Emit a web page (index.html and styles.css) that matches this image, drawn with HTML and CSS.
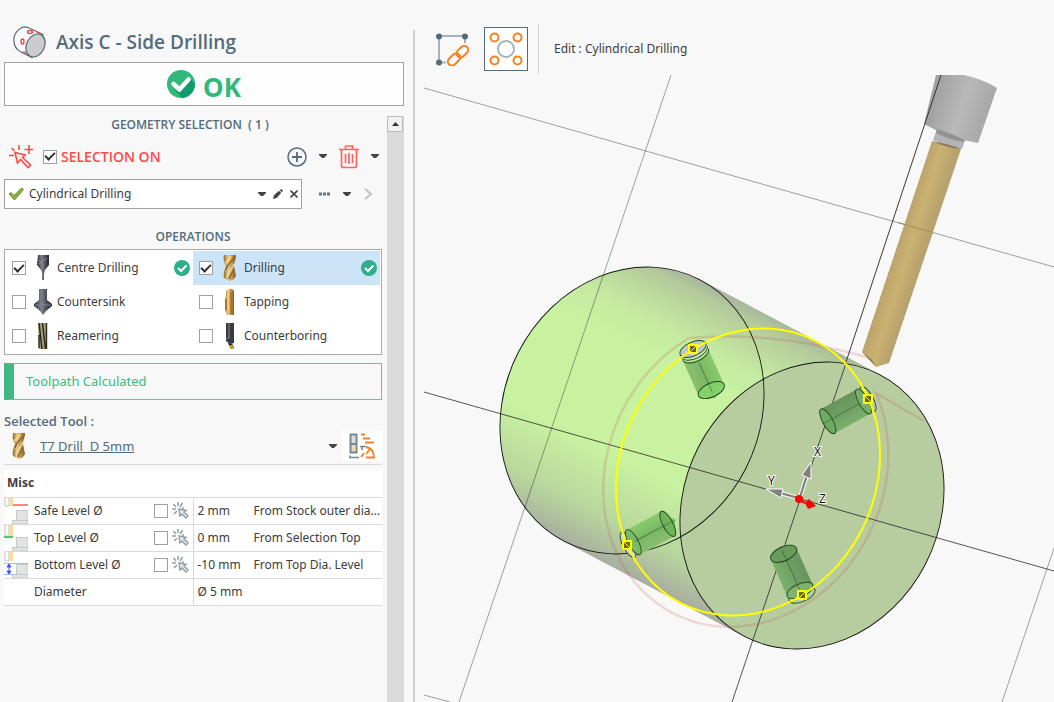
FILE: index.html
```html
<!DOCTYPE html>
<html lang="en">
<head>
<meta charset="utf-8">
<title>Axis C - Side Drilling</title>
<link rel="stylesheet" href="styles.css">
</head>
<body>
<svg class="defs" width="0" height="0" aria-hidden="true">
  <defs>
    <linearGradient id="gold" x1="0" x2="1"><stop offset="0" stop-color="#8a652c"/><stop offset=".35" stop-color="#eccd85"/><stop offset=".65" stop-color="#c79a4b"/><stop offset="1" stop-color="#7a5626"/></linearGradient>
    <linearGradient id="steel" x1="0" x2="1"><stop offset="0" stop-color="#2c2e36"/><stop offset=".4" stop-color="#7d818c"/><stop offset=".7" stop-color="#4a4d57"/><stop offset="1" stop-color="#25262c"/></linearGradient>
    <symbol id="caret" viewBox="0 0 8 5"><path d="M0 0h8v1L5 4H3L0 1z" fill="#444"/></symbol>
    <symbol id="done" viewBox="0 0 16 16"><circle cx="8" cy="8" r="8" fill="#2fae8e"/><path d="M4 8l3 3 5.500-5.500" fill="none" stroke="#fff" stroke-width="2"/></symbol>
    <symbol id="drill" viewBox="0 0 16 26"><path d="M2 0h12c0 3-1 6-2 9 0 4 1 6 2 12l-2 3-4 2-6-3c-1-5 1-9 2-12C2 8 1 4 2 0z" fill="url(#gold)"/><path d="M13 1C11 7 5 8 4 15M12 14c-1 4-4 6-5 10" stroke="#8a6833" stroke-width="1.500" fill="none"/><path d="M9 1c-1 4-4 5-6 7M12 9c-2 5-6 8-7 13" stroke="#f3d797" stroke-width="1.500" fill="none"/></symbol>
    <symbol id="pick" viewBox="0 0 17 17"><g fill="none" stroke="#8fa0a8" stroke-width="1.500"><path d="M6 0v4M1.500 2l2.500 3M0 7h4M2 12l3-3M10.500 1L8 5M12 6h-2"/><path d="M7 7l1 7 2-2 4 4 2-2-4-4 2-1.500z" fill="#e9eef0"/></g></symbol>
    <symbol id="block" viewBox="0 0 24 26"><path d="M12.500 12.500H24v10H12.500zM8.500 22.500H24V26H8.500z" fill="#e3e3e3" stroke="#c3c8cb"/></symbol>
  </defs>
</svg>
<div class="app">
  <section class="panel">
    <header class="title">
      <svg width="34" height="34" viewBox="0 0 34 34"><path d="M15 2.500C8 0 0 8 1 16c0 6 3 9 7 11l11 5.500L30 9.500z" fill="#fff" stroke="#536874" stroke-width="1.200"/><ellipse cx="22.500" cy="20.500" rx="12" ry="9" transform="rotate(-63 22.500 20.500)" fill="#ccc" stroke="#536874" stroke-width="1.200"/><g fill="none" stroke="#f4444d" stroke-width="1.400"><ellipse cx="17" cy="7" rx="2.500" ry="1.500"/><ellipse cx="9.500" cy="16.500" rx="1.500" ry="2.500"/><path d="M23 6.500l3 2M10 26.500l3 2"/></g></svg>
      <h1>Axis C - Side Drilling</h1>
    </header>
    <button class="ok" type="button">
      <svg width="28" height="28" viewBox="0 0 28 28"><circle cx="14" cy="14" r="14" fill="#33b87b"/><path d="M23 8l5 6a14 14 0 0 1-13 14l-7-8z" fill="#0d9c6c"/><path d="M6.500 14l6 5.500L21.500 9.500" fill="none" stroke="#fff" stroke-width="4.500" stroke-linejoin="round" stroke-linecap="round"/></svg>
      <span>OK</span>
    </button>
    <div class="scroller">
      <div class="content">
        <h2 class="geometry">GEOMETRY SELECTION&nbsp; ( 1 )</h2>
        <div class="selection">
          <svg width="24" height="24" viewBox="0 0 24 24" fill="none" stroke="#fb4a4a" stroke-width="1.600"><path d="M6 7.500l10 2.500-2.500 2.500 8 7.500-2.500 2.500-7.500-8L8.500 18z"/><path d="M0 10.500h5M2.500 3l3 3M10 0v5M20 0v9M15.500 4.500h8.500"/></svg>
          <label class="on"><input type="checkbox" checked> SELECTION ON</label>
          <button class="icon add" type="button" aria-label="Add"><svg width="20" height="20" viewBox="0 0 20 20" fill="none" stroke="#536b7a" stroke-width="1.500"><circle cx="10" cy="10" r="9"/><path d="M5 10h10M10 5v10" stroke-width="1.800"/></svg></button>
          <button class="icon" type="button" aria-label="Add options"><svg width="8" height="5"><use href="#caret"/></svg></button>
          <button class="icon bin" type="button" aria-label="Delete"><svg width="20" height="24" viewBox="0 0 20 24" fill="none" stroke="#fb6565" stroke-width="1.700"><path d="M0 4.500h20M6.500 4V1h7v3M2.500 5v15.500q0 2 2 2h11q2 0 2-2V5M6.500 9v9M10 8v11M13.500 9v9"/></svg></button>
          <button class="icon" type="button" aria-label="Delete options"><svg width="8" height="5"><use href="#caret"/></svg></button>
        </div>
        <div class="feature">
          <div class="combo">
            <svg width="16" height="14" viewBox="0 0 16 14"><path d="M1 7l2-1.500 3 3L13.500 1 15.500 2.500 6.500 13z" fill="#8fae3f" stroke="#6f8f2f"/></svg>
            <select aria-label="Feature"><option>Cylindrical Drilling</option></select>
            <svg width="8" height="5"><use href="#caret"/></svg>
            <button class="icon" type="button" aria-label="Rename"><svg width="10" height="10" viewBox="0 0 11 11" fill="#444"><path d="M0 11l1-4 5.500-5L9 4.500 4 10zM7.500 1.500L9 0l2 2-1.500 1.500z"/></svg></button>
            <button class="icon" type="button" aria-label="Remove"><svg width="8" height="8" viewBox="0 0 8 8" stroke="#444" stroke-width="1.600"><path d="M.5.500l7 7M7.500.500l-7 7"/></svg></button>
          </div>
          <button class="icon" type="button" aria-label="More"><svg width="11" height="4" viewBox="0 0 11 4" fill="#5f7583"><path d="M0 .500h3v3H0zM4 .500h3v3H4zM8 .500h3v3H8z"/></svg></button>
          <button class="icon" type="button" aria-label="More options"><svg width="8" height="5"><use href="#caret"/></svg></button>
          <button class="icon" type="button" aria-label="Next"><svg width="9" height="12" viewBox="0 0 9 12" fill="none" stroke="#bcc4c8" stroke-width="2"><path d="M1 1l6 5-6 5"/></svg></button>
        </div>
        <h2 class="operations">OPERATIONS</h2>
        <div class="ops">
          <label class="op"><input type="checkbox" checked><svg width="18" height="26" viewBox="0 0 18 26"><path d="M4 0h11v10l-4 5-1 4v6H8v-7l-1-3-4-5z" fill="url(#steel)"/><path d="M5 5l5 6M5 9l8-6" stroke="#8f939d"/></svg><span>Centre Drilling</span><svg class="state" width="16" height="16"><use href="#done"/></svg></label>
          <label class="op current"><input type="checkbox" checked><svg width="18" height="26"><use href="#drill"/></svg><span>Drilling</span><svg class="state" width="16" height="16"><use href="#done"/></svg></label>
          <label class="op"><input type="checkbox"><svg width="18" height="26" viewBox="0 0 18 26"><path d="M5 0h8v11l5 4v2l-6 5-3 4-3-4-6-5v-2l5-4z" fill="url(#steel)"/><path d="M1 16h16M9 12v8" stroke="#82868f"/></svg><span>Countersink</span></label>
          <label class="op"><input type="checkbox"><svg width="18" height="26" viewBox="0 0 18 26"><path d="M5 2l3-2h3l2 2v24H6L4 20V10l1-2z" fill="url(#gold)"/><path d="M5 11v10M10 3v22" stroke="#b06c18" stroke-width="1.500"/><path d="M7 2v20" stroke="#f6d690"/></svg><span>Tapping</span></label>
          <label class="op"><input type="checkbox"><svg width="18" height="26" viewBox="0 0 18 26"><path d="M4 0h9v26H5z" fill="#a49b76"/><path d="M5 0l3 26M8.500 0l3 26M12.500 0v26M5 12v13" stroke="#29271e" stroke-width="1.400"/></svg><span>Reamering</span></label>
          <label class="op"><input type="checkbox"><svg width="18" height="26" viewBox="0 0 18 26"><path d="M5 0h8v20l-4 1-4-3z" fill="#393b42"/><path d="M8 0v14M5 16l4-2" stroke="#85898f"/><path d="M7 20l5 1-3 3z" fill="#222"/><path d="M9 22h4v4H9z" fill="#c69b3b"/></svg><span>Counterboring</span></label>
        </div>
        <div class="status" role="status">Toolpath Calculated</div>
        <h3>Selected Tool :</h3>
        <div class="tool">
          <svg width="16" height="26"><use href="#drill"/></svg>
          <a href="#">T7 Drill&nbsp; D 5mm</a>
          <button class="icon" type="button" aria-label="Choose tool"><svg width="8" height="5"><use href="#caret"/></svg></button>
          <button class="icon feeds" type="button" aria-label="Speeds and feeds"><svg width="26" height="26" viewBox="0 0 26 26" fill="none"><path d="M1.500 1.500h6v18h-6zM1.500 11h6" fill="#dedede" stroke="#718997" stroke-width="2"/><path d="M5 12h2v6H5z" fill="#ffc96b"/><path d="M1 22.500v2h9M11 13.500h6M13 13v4" stroke="#718997" stroke-width="1.600"/><path d="M12 1.500h4M14 5.500h7M16 9.500h9M17 14c5 1 8 5 8 10.500h-8M17 21l5-6M15 20l-3 4" stroke="#f58220" stroke-width="1.800"/></svg></button>
        </div>
        <table class="misc">
          <thead><tr><th colspan="2">Misc</th></tr></thead>
          <tbody>
            <tr><td><label class="param"><svg width="24" height="26" viewBox="0 0 24 26"><use href="#block" width="24" height="26"/><path d="M1 0v8h4V0" stroke="#bbc3c8" fill="#fff"/><path d="M5 0h4v8H5z" fill="#f9dd9c"/><path d="M9 7h15" stroke="#ff8585" stroke-width="2"/></svg><span>Safe Level Ø</span><input type="checkbox"><svg width="17" height="17"><use href="#pick"/></svg></label></td><td><div class="value"><span>2 mm</span><span>From Stock outer dia...</span></div></td></tr>
            <tr><td><label class="param"><svg width="24" height="26" viewBox="0 0 24 26"><use href="#block" width="24" height="26"/><path d="M1 0v11h4V0" stroke="#bbc3c8" fill="#fff"/><path d="M5 0h4v11H5z" fill="#f9dd9c"/><path d="M0 12h9" stroke="#4fc876" stroke-width="2"/></svg><span>Top Level Ø</span><input type="checkbox"><svg width="17" height="17"><use href="#pick"/></svg></label></td><td><div class="value"><span>0 mm</span><span>From Selection Top</span></div></td></tr>
            <tr><td><label class="param"><svg width="24" height="26" viewBox="0 0 24 26"><use href="#block" width="24" height="26"/><path d="M1 0v9h4V0" stroke="#bbc3c8" fill="#fff"/><path d="M5 0h4v9H5z" fill="#f9dd9c"/><path d="M0 11.500h24M0 22.500h9" stroke="#a6b7ff"/><path d="M5 12v10M3 15l2-3 2 3zM3 19l2 3 2-3z" stroke="#3d5bff" fill="#3d5bff"/></svg><span>Bottom Level Ø</span><input type="checkbox"><svg width="17" height="17"><use href="#pick"/></svg></label></td><td><div class="value"><span>-10 mm</span><span>From Top Dia. Level</span></div></td></tr>
            <tr><td><div class="param last">Diameter</div></td><td><div class="value"><span>Ø 5 mm</span></div></td></tr>
          </tbody>
        </table>
      </div>
      <div class="bar"><button type="button" aria-label="Scroll up"><svg width="7" height="4" viewBox="0 0 7 4"><path d="M3.500 0L7 4H0z" fill="#333"/></svg></button></div>
    </div>
  </section>
  <div class="splitter"></div>
  <main class="work">
    <div class="toolbar">
      <button type="button" aria-label="Chain selection"><svg width="34" height="34" viewBox="0 0 34 34" fill="none"><path d="M4 31V4h26v7M4 30.500h7" stroke="#a3b3bc" stroke-width="2"/><g fill="#536b78"><circle cx="4" cy="4.500" r="3"/><circle cx="30" cy="4.500" r="3"/><circle cx="4" cy="30.500" r="3"/></g><g stroke="#f58220" stroke-width="2"><rect x="21" y="16" width="13" height="8" rx="4" transform="rotate(-45 27 20)"/><rect x="12" y="23.500" width="14" height="8" rx="4" transform="rotate(-45 19 27.500)"/></g></svg></button>
      <button type="button" class="active" aria-label="Cylindrical drilling"><svg width="34" height="34" viewBox="0 0 34 34" fill="none"><circle cx="17" cy="17" r="8" stroke="#a3b3bc" stroke-width="2"/><g stroke="#f58220" stroke-width="2"><circle cx="5.500" cy="5.500" r="4"/><circle cx="28.500" cy="5.500" r="4"/><circle cx="5.500" cy="28.500" r="4"/><circle cx="28.500" cy="28.500" r="4"/></g></svg></button>
      <p>Edit : Cylindrical Drilling</p>
    </div>
    <svg class="scene" viewBox="424 75 630 627" preserveAspectRatio="xMinYMin slice" role="img" aria-label="Model view">
      <defs>
        <linearGradient id="body" gradientUnits="userSpaceOnUse" x1="699" y1="279" x2="565" y2="542"><stop offset="0" stop-color="#a9b59d"/><stop offset=".05" stop-color="#b4cb9b"/><stop offset=".2" stop-color="#c5eba0"/><stop offset=".32" stop-color="#c8f2a0"/><stop offset=".66" stop-color="#c8f2a0"/><stop offset=".86" stop-color="#b9d89d"/><stop offset="1" stop-color="#a8aea0"/></linearGradient>
        <linearGradient id="hole" x1="0" x2="1"><stop offset="0" stop-color="#8abf70"/><stop offset=".5" stop-color="#7ab765"/><stop offset="1" stop-color="#88cb6c"/></linearGradient>
        <linearGradient id="holeDark" x1="0" x2="1"><stop offset="0" stop-color="#68935c"/><stop offset=".5" stop-color="#6f9f65"/><stop offset="1" stop-color="#7bb06d"/></linearGradient>
        <linearGradient id="shank" gradientUnits="userSpaceOnUse" x1="900" y1="230" x2="928" y2="239"><stop offset="0" stop-color="#b9a16d"/><stop offset=".5" stop-color="#cbb272"/><stop offset="1" stop-color="#b7a16d"/></linearGradient>
        <linearGradient id="chuck" gradientUnits="userSpaceOnUse" x1="932" y1="105" x2="987" y2="122"><stop offset="0" stop-color="#a2a2a2"/><stop offset=".5" stop-color="#b9b9b9"/><stop offset="1" stop-color="#a7a7a7"/></linearGradient>
        <clipPath id="cap"><ellipse cx="632" cy="410.500" rx="147.400" ry="127.700" transform="rotate(-62.900 632 410.500)"/></clipPath>
      </defs>
      <path d="M699 279L879 374L745 637L565 542z" fill="url(#body)"/>
      <path d="M480 250H780V570H480z" fill="url(#body)" clip-path="url(#cap)"/>
      <ellipse cx="812" cy="505.500" rx="147.400" ry="127.700" transform="rotate(-62.900 812 505.500)" fill="#b7cda0"/>
      <g fill="none" stroke="#111" stroke-opacity=".38"><path d="M424 88L1054 267M671 75L459 702M1054 548L1002 702M424 695L450 702"/><path d="M424 392L1054 571M846 363L732 702" stroke-opacity=".7"/></g>
      <g fill="none" stroke="#111" stroke-width=".9"><ellipse cx="632" cy="410.500" rx="147.400" ry="127.700" transform="rotate(-62.900 632 410.500)"/><ellipse cx="812" cy="505.500" rx="147.400" ry="127.700" transform="rotate(-62.900 812 505.500)"/></g>
      <path d="M689 338Q755 333 815 345T872 361M689 338A159 138 -62.900 1 0 876 393L924 421" fill="none" stroke="#c05050" stroke-opacity=".2" stroke-width="2.500"/>
      <g stroke="#1d4a1d" stroke-width=".9">
        <g transform="translate(693 349) rotate(-24)"><ellipse rx="14" ry="7" fill="#bfc5cb"/><path d="M-14 5V45A14 7 0 0 0 14 45V5A14 7 0 0 1-14 5z" fill="url(#hole)" stroke="none"/><path d="M-6 50L0 54L6 50" fill="#82c568" stroke="none"/><ellipse cy="45" rx="14" ry="7" fill="#85d169"/><path d="M-14 3A14 7 0 0 0 14 3M-14 6A14 7 0 0 0 14 6" fill="none"/><path d="M0 15V48" stroke-opacity=".5"/></g>
        <g transform="translate(628 545) rotate(-118)"><ellipse rx="14" ry="5" fill="#cdd3d6"/><path d="M-14 5V46A14 5 0 0 0 14 46V5A14 5 0 0 1-14 5z" fill="url(#hole)" stroke="none"/><path d="M-8 47L0 54L8 47" fill="#7cc264" stroke="none"/><ellipse cy="45" rx="14" ry="5" fill="#6fb45b"/><ellipse cy="6" rx="14" ry="5" fill="#7dba67"/><path d="M0 8V52" stroke-opacity=".5"/></g>
        <g transform="translate(868 399) rotate(61)"><ellipse rx="14" ry="5" fill="none"/><path d="M-14 5V46A14 5 0 0 0 14 46V5A14 5 0 0 1-14 5z" fill="url(#holeDark)" stroke="none"/><ellipse cy="46" rx="14" ry="5" fill="#70a962"/><ellipse cy="5" rx="14" ry="5" fill="#79ae6c"/><path d="M0 9V52" stroke-opacity=".5"/></g>
        <g transform="translate(802 595) rotate(156)"><ellipse rx="14" ry="6.500" fill="none"/><path d="M-14 5V46A14 7 0 0 0 14 46V5A14 7 0 0 1-14 5z" fill="url(#holeDark)" stroke="none"/><ellipse cy="45" rx="14" ry="7" fill="#6a9b5e"/><ellipse cy="5" rx="14" ry="6.500" fill="#82b174"/><path d="M0 6V49" stroke-opacity=".5"/></g>
      </g>
      <ellipse cx="748" cy="472" rx="147.400" ry="127.700" transform="rotate(-62.900 748 472)" fill="none" stroke="#ff0" stroke-width="2"/>
      <g fill="#696b13" stroke="#ff0" stroke-width="2"><path d="M689 345h8v8h-8zM623 541h8v8h-8zM864 395h8v8h-8zM798 591h8v8h-8z"/><path d="M690 352l6-6M624 542l6 6M865 396l6 6M799 598l6-6" stroke-width="1"/></g>
      <path d="M936 75h28q19 4 33 13l-19 55q-28-4-54-19z" fill="url(#chuck)"/><path d="M937 129q14 4 28 11l-3 9q-14-2-29-9z" fill="#b4b4b4"/><path d="M937 129q14 4 28 11l-1 2q-14-2-28-9z" fill="#929292"/>
      <path d="M932 141q16 5 29 8L889 363l-13 4-14-15z" fill="url(#shank)"/><path d="M862 352l10 8 4 7zM932 141q17 3 29 8-14-1-29-8z" fill="#8b795a"/>
      <path d="M898 222.500L933 232.500" stroke="#a18d5c"/>
      <path d="M941 75L846 362" stroke="#2b2020" stroke-width=".9"/>
      <g stroke="#fff" stroke-width="1"><path d="M798 498l9-28 3 1-9 28z" fill="#808080"/><path d="M811 462l-9 13 9 4z" fill="#808080"/><path d="M800 500l-26-7 1-3 26 7z" fill="#808080"/><path d="M766 489l17 0-2 9z" fill="#808080"/></g>
      <g fill="#f00"><circle cx="799" cy="499" r="4"/><path d="M800 499l6 3-1 2-6-3z"/><path d="M805 503l4-4 7 7-8 3z"/></g>
      <g class="axis"><text x="814" y="456">X</text><text x="768" y="485">Y</text><text x="819" y="503">Z</text></g>
    </svg>
  </main>
</div>
</body>
</html>
```
FILE: styles.css
```css
* { box-sizing: border-box; }
body {
  margin: 0;
  background: #f8f8f8;
  color: #3c3c3c;
  font: 12px/16px "Noto Sans", "Open Sans", sans-serif;
}
h1, h2, h3, p { margin: 0; }
svg { display: block; flex: none; }
.defs { position: absolute; }
.app { display: flex; height: 100vh; min-height: 620px; overflow: hidden; }

.panel { display: flex; flex-direction: column; flex: none; width: 404px; padding: 22px 0 0 4px; }
.title { display: flex; align-items: center; gap: 9px; height: 40px; padding-left: 9px; color: #536b7a; }
.title h1 { font: 600 19px/28px "Open Sans", sans-serif; }
button { font: inherit; color: inherit; cursor: pointer; }
.ok {
  display: flex; align-items: center; justify-content: center; gap: 8px;
  flex: none; height: 44px; padding: 0; border: 1px solid #a0a0a0; background: #fdfdfd;
  color: #33b87b; font: bold 26px/32px "Noto Sans", sans-serif;
}
.ok span { padding-top: 5px; }
.scroller { display: flex; flex: 1; gap: 5px; margin-top: 10px; }
.content { flex: 1; min-width: 0; }
.bar { width: 17px; background: #dadada; }
.bar button { display: grid; place-items: center; width: 16px; height: 16px; padding: 0; border: 1px solid #bbb; background: #f0f0f0; }

h2 { color: #536b7a; font: 600 12px/18px "Open Sans", sans-serif; text-align: center; }
.geometry { padding-right: 6px; }
.icon { display: grid; place-items: center; padding: 0; border: 0; background: none; }
input[type="checkbox"] {
  appearance: none; display: grid; place-items: center; flex: none;
  width: 14px; height: 14px; margin: 0; border: 1px solid #a0a0a0; background: #fff;
}
input[type="checkbox"]:checked::after {
  content: ""; width: 8px; height: 4px; margin-bottom: 3px;
  border: solid #333; border-width: 0 0 2px 2px; transform: rotate(-45deg);
}
.selection { display: flex; align-items: center; height: 45px; padding: 0 3px 0 5px; }
.on { display: flex; align-items: center; gap: 4px; margin: 0 auto 0 10px; color: #fb4a4a; font: 600 14px/20px "Open Sans", sans-serif; }
.add { margin-right: 12px; }
.bin { margin: 0 12px; }
.feature { display: flex; align-items: center; gap: 13px; padding-right: 9px; }
.combo { display: flex; align-items: center; flex: 1; gap: 7px; height: 30px; margin-right: 4px; padding: 0 3px; border: 1px solid #a0a0a0; background: #fff; }
.combo select { appearance: none; flex: 1; min-width: 0; margin-left: -2px; padding: 0; border: 0; background: none; color: inherit; font: inherit; }

.operations { margin-top: 19px; }
.ops { display: grid; grid-template-columns: 1fr 1fr; margin-top: 3px; padding: 1px; border: 1px solid #a9a9a9; background: #fff; }
.op { display: flex; align-items: center; height: 34px; padding: 0 3px 0 6px; }
.op > svg { margin: 0 5px 0 8px; }
.op > .state { margin: 0 0 0 auto; }
.current { background: #cce4f7; }
.status { margin-top: 8px; padding: 8px 12px 9px; border: 1px solid #62c59c; border-left-width: 10px; border-left-color: #41b883; color: #41b883; font-size: 13px; line-height: 18px; }
h3 { margin-top: 12px; color: #536b7a; font: 600 13px/18px "Open Sans", sans-serif; }
.tool { display: flex; align-items: center; height: 35px; padding: 0 0 2px 7px; border-bottom: 1px solid #dadada; }
.tool a { margin: 0 auto 0 13px; color: #536b7a; font-size: 13px; }
.feeds { width: 40px; height: 30px; margin-left: 5px; background: #fff; }

.misc { width: 100%; margin-top: 5px; border-collapse: collapse; table-layout: fixed; background: #fff; }
.misc th { height: 27px; padding: 0 3px; text-align: left; }
.misc td { height: 27px; padding: 0; border-top: 1px solid #dadada; border-bottom: 1px solid #dadada; }
.misc td + td { border-left: 1px solid #dadada; }
.param { display: flex; align-items: center; height: 26px; }
.param span { margin: 0 auto 0 6px; }
.param input + svg { margin: 0 4px; }
.last { padding-left: 30px; }
.value { display: grid; grid-template-columns: 56px 1fr; padding-left: 4px; white-space: nowrap; }

.splitter { flex: none; width: 2px; margin: 30px 9px 0; background: #cfcfcf; }
.work { display: flex; flex-direction: column; flex: 1; min-width: 0; }
.toolbar { display: flex; align-items: center; flex: none; height: 75px; padding: 22px 0 0 6px; gap: 10px; }
.toolbar button { display: grid; place-items: center; width: 44px; height: 44px; padding: 0; border: 1px solid transparent; background: none; }
.toolbar .active { border-color: #536b7a; background: #fff; }
.toolbar p { display: flex; align-items: center; height: 50px; padding-left: 15px; border-left: 1px solid #d0d0d0; }
.scene { flex: 1; width: 100%; min-height: 0; }
.axis { fill: #111; stroke: #fff; stroke-width: 2px; paint-order: stroke; font: 12px "Noto Sans", sans-serif; }
```
